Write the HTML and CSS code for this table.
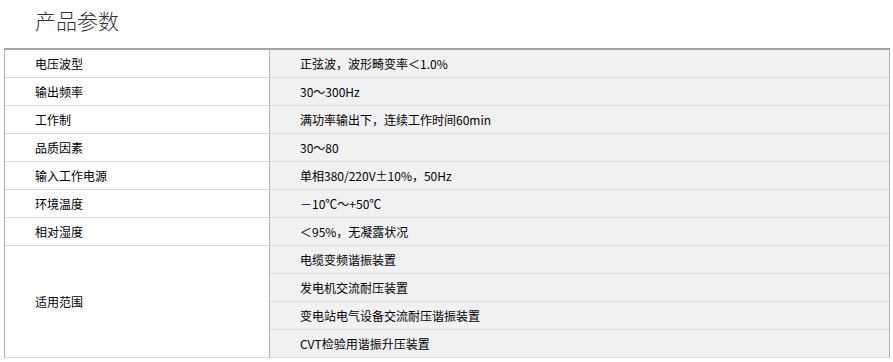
FILE: index.html
```html
<!DOCTYPE html>
<html lang="zh-CN">
<head>
<meta charset="utf-8">
<title>产品参数</title>
<link rel="stylesheet" href="styles.css">
</head>
<body>
<h2 class="title">产品参数</h2>
<table class="params">
  <tbody>
    <tr><td class="k">电压波型</td><td class="v">正弦波，波形畸变率＜1.0%</td></tr>
    <tr><td class="k">输出频率</td><td class="v">30～300Hz</td></tr>
    <tr><td class="k">工作制</td><td class="v">满功率输出下，连续工作时间60min</td></tr>
    <tr><td class="k">品质因素</td><td class="v">30～80</td></tr>
    <tr><td class="k">输入工作电源</td><td class="v">单相380/220V±10%，50Hz</td></tr>
    <tr><td class="k">环境温度</td><td class="v">－10℃～+50℃</td></tr>
    <tr><td class="k">相对湿度</td><td class="v">＜95%，无凝露状况</td></tr>
    <tr><td class="k" rowspan="4">适用范围</td><td class="v">电缆变频谐振装置</td></tr>
    <tr><td class="v">发电机交流耐压装置</td></tr>
    <tr><td class="v">变电站电气设备交流耐压谐振装置</td></tr>
    <tr><td class="v">CVT检验用谐振升压装置</td></tr>
  </tbody>
</table>
</body>
</html>
```
FILE: styles.css
```css
html, body {
  margin: 0;
  padding: 0;
  background: #fff;
}
body {
  font-family: "Noto Sans CJK SC", "Noto Sans", sans-serif;
  color: #000;
}
.title {
  margin: 0;
  padding-left: 35px;
  height: 48px;
  line-height: 41px;
  font-size: 21px;
  font-weight: 300;
  color: #333;
}
.params {
  margin-left: 4px;
  width: 886px;
  border-collapse: separate;
  border-spacing: 0;
  border-top: 2px solid #a4a4a4;
  border-left: 1px solid #b9b1b8;
  border-right: 1px solid #b9b1b8;
  font-size: 12px;
}
.params td {
  height: 27px;
  padding: 0 0 0 30px;
  border-bottom: 1px solid #dadada;
  vertical-align: middle;
  line-height: 16px;
}
.params td.k {
  width: 265px;
  box-sizing: border-box;
  background: #fff;
  border-right: 1px solid #b9b1b8;
}
.params td.v {
  background: #f1f1f1;
}
```
